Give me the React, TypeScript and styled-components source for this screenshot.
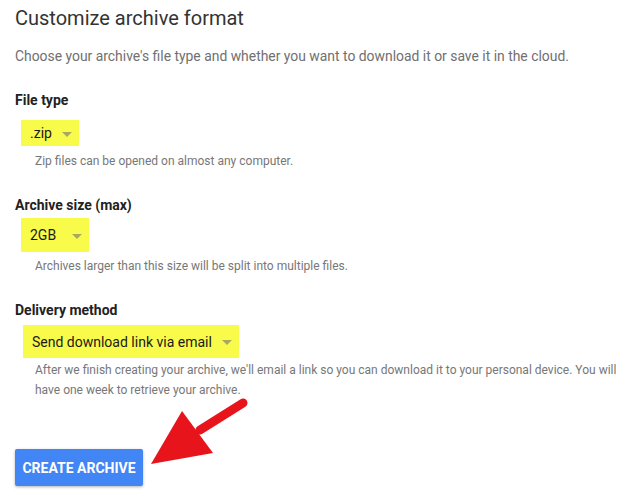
import styled, { createGlobalStyle } from "styled-components";

type Field = {
  label: string;
  value: string;
  help: string[];
  labelGap: number;
  boxHeight: number;
  boxLeft: number;
  caretGap: number;
  helpGap: number;
};

const fields: Field[] = [
  {
    label: "File type",
    value: ".zip",
    help: ["Zip files can be opened on almost any computer."],
    labelGap: 10,
    boxHeight: 26,
    boxLeft: 6,
    caretGap: 10,
    helpGap: 5,
  },
  {
    label: "Archive size (max)",
    value: "2GB",
    help: ["Archives larger than this size will be split into multiple files."],
    labelGap: 3,
    boxHeight: 34,
    boxLeft: 6,
    caretGap: 16,
    helpGap: 4,
  },
  {
    label: "Delivery method",
    value: "Send download link via email",
    help: [
      "After we finish creating your archive, we'll email a link so you can download it to your personal device. You will",
      "have one week to retrieve your archive.",
    ],
    labelGap: 5,
    boxHeight: 33,
    boxLeft: 8,
    caretGap: 10,
    helpGap: 2,
  },
];

export default function App() {
  return (
    <Page>
      <GlobalStyle />
      <Title>Customize archive format</Title>
      <Subtitle>
        Choose your archive's file type and whether you want to download it or
        save it in the cloud.
      </Subtitle>
      {fields.map((field) => (
        <FieldBlock key={field.label} {...field} />
      ))}
      <CreateButton>Create archive</CreateButton>
      <Arrow width="100" height="75" viewBox="0 0 100 75">
        <path
          d="M93 13 L50 40"
          stroke="#e8141c"
          strokeWidth="9"
          strokeLinecap="round"
        />
        <polygon points="32,21 63,63 1,74" fill="#e8141c" />
      </Arrow>
    </Page>
  );
}

function FieldBlock({ label, value, help, labelGap, boxHeight, boxLeft, caretGap, helpGap }: Field) {
  return (
    <FieldWrapper>
      <Label>{label}</Label>
      <Highlight $gap={labelGap} $height={boxHeight} $left={boxLeft} $caretGap={caretGap}>
        <span>{value}</span>
        <Caret />
      </Highlight>
      <Help $gap={helpGap}>
        {help.map((line) => (
          <div key={line}>{line}</div>
        ))}
      </Help>
    </FieldWrapper>
  );
}

const GlobalStyle = createGlobalStyle`
  body {
    margin: 0;
    background: #fff;
    font-family: Roboto, "Liberation Sans", sans-serif;
  }
`;

const Page = styled.div`
  position: relative;
  width: 638px;
  height: 502px;
  padding: 4px 0 0 15px;
  box-sizing: border-box;
  overflow: hidden;
`;

const Title = styled.h1`
  margin: 0;
  font-size: 20px;
  line-height: 28px;
  font-weight: 400;
  color: #333;
`;

const Subtitle = styled.p`
  margin: 14px 0 0;
  font-size: 13.9px;
  line-height: 20px;
  color: #707070;
`;

const FieldWrapper = styled.div`
  margin-top: 24px;
  display: flex;
  flex-direction: column;
  align-items: flex-start;
`;

const Label = styled.div`
  font-size: 14px;
  line-height: 20px;
  font-weight: 700;
  color: #222;
`;

const Highlight = styled.div<{
  $gap: number;
  $height: number;
  $left: number;
  $caretGap: number;
}>`
  margin: ${(p) => p.$gap}px 0 0 ${(p) => p.$left}px;
  height: ${(p) => p.$height}px;
  padding: 0 7px 0 9px;
  display: inline-flex;
  align-items: center;
  gap: ${(p) => p.$caretGap}px;
  background: #f8fb4a;
  font-size: 14px;
  color: #1a1a1a;
`;

const Caret = styled.span`
  width: 0;
  height: 0;
  border-left: 5px solid transparent;
  border-right: 5px solid transparent;
  border-top: 5px solid #a9a860;
  margin-top: 2px;
`;

const Help = styled.div<{ $gap: number }>`
  margin: ${(p) => p.$gap}px 0 0 20px;
  font-size: 12px;
  line-height: 20px;
  color: #777;
`;

const CreateButton = styled.button`
  margin-top: 49px;
  width: 128px;
  height: 37px;
  border: none;
  border-radius: 2px;
  background: #4285f4;
  color: #fff;
  font-family: Roboto, "Liberation Sans", sans-serif;
  font-size: 14px;
  font-weight: 700;
  text-transform: uppercase;
  box-shadow: 0 1px 3px rgba(0, 0, 0, 0.3);
  padding: 0;
`;

const Arrow = styled.svg`
  position: absolute;
  left: 150px;
  top: 390px;
  overflow: visible;
`;
